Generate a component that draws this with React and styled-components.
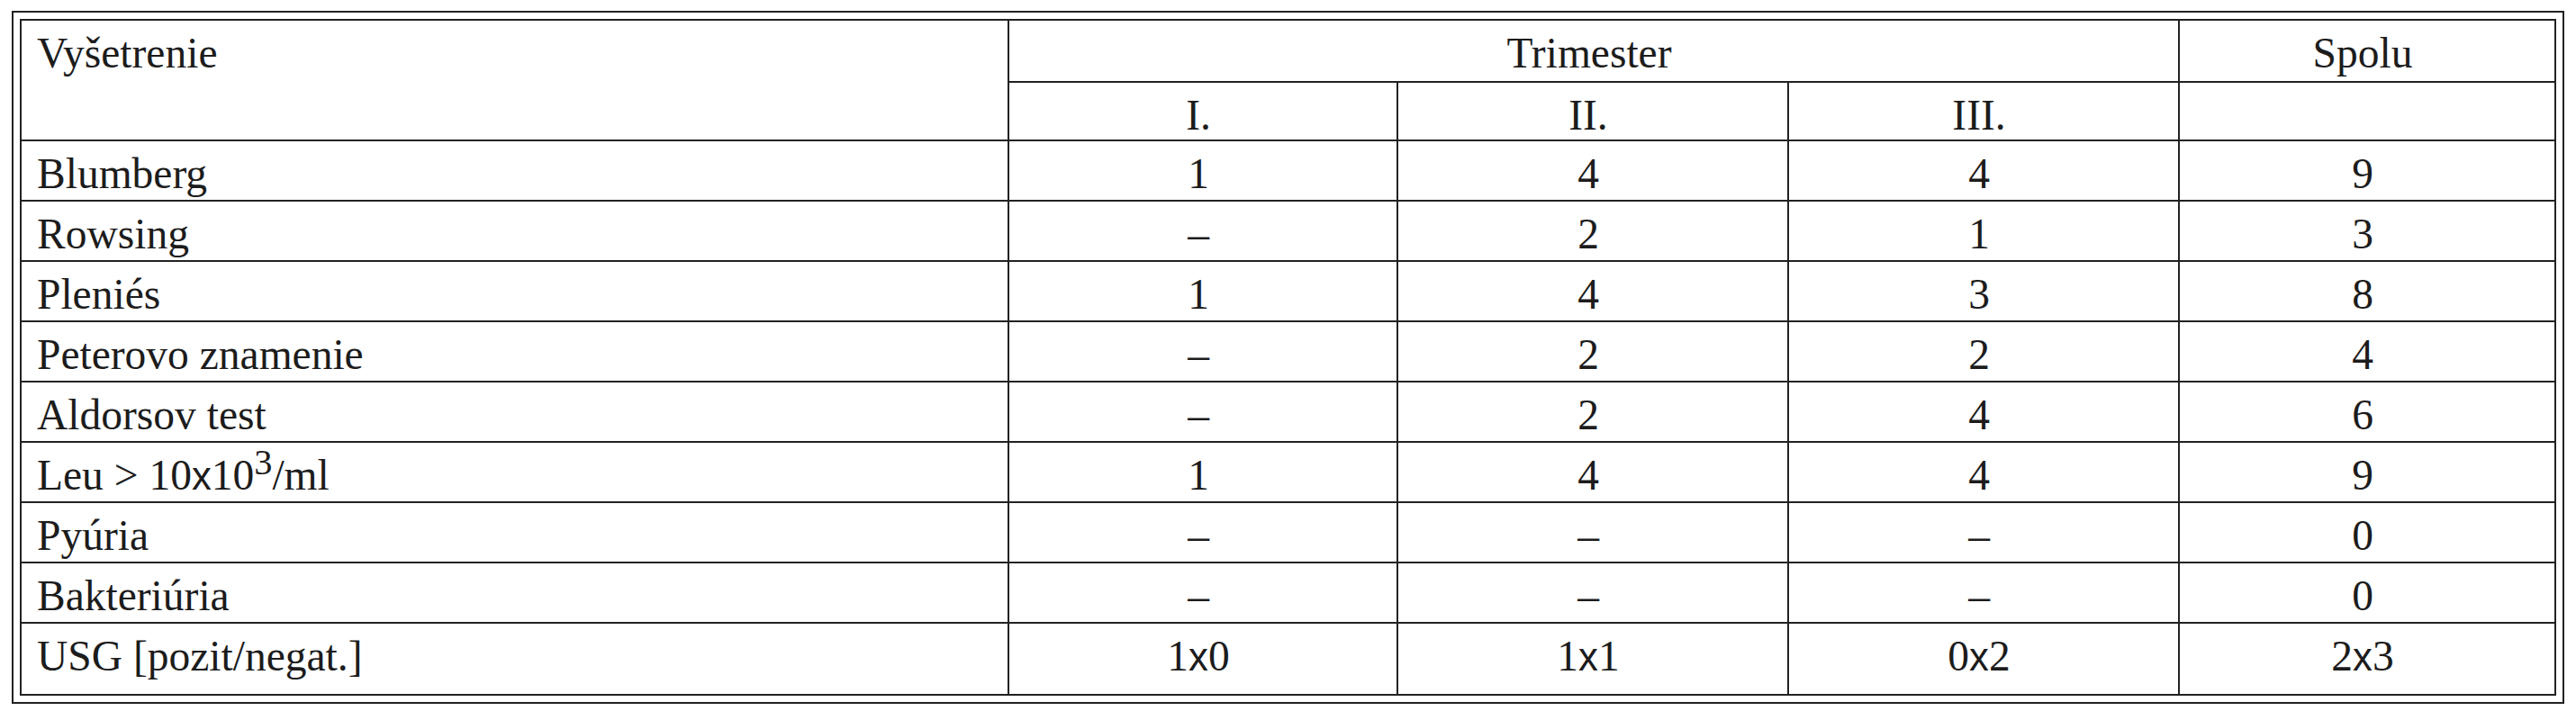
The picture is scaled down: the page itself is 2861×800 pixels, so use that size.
import React from "react";
import styled, { createGlobalStyle } from "styled-components";

const GlobalStyle = createGlobalStyle`
  html, body {
    margin: 0;
    padding: 0;
    background: #fff;
  }
`;

const Page = styled.div`
  padding: 12px 13px;
`;

const Frame = styled.div`
  border: 2px solid #222;
  padding: 7px;
`;

const Table = styled.table`
  width: 100%;
  border-collapse: collapse;
  border: 2px solid #222;
  table-layout: fixed;
  font-family: "Liberation Serif", "Times New Roman", serif;
  font-size: 47.5px;
  line-height: 54px;
  color: #1c1c1c;
`;

const Row = styled.tr`
  height: ${(p) => p.$h}px;
`;

const Cell = styled.td`
  border: 2px solid #222;
  padding: 9px ${(p) => (p.$left ? 17 : 20)}px 0 ${(p) => (p.$left ? 17 : 10)}px;
  vertical-align: top;
  text-align: ${(p) => (p.$left ? "left" : "center")};
  font-weight: normal;
  white-space: nowrap;
`;

const Sup = styled.sup`
  font-size: 0.85em;
  line-height: 0;
  vertical-align: 0.42em;
`;

const Times = styled.span`
  font-family: "Liberation Sans", Arial, sans-serif;
  font-size: 0.92em;
`;

const cross = (a, b) => (
  <>
    {a}
    <Times>x</Times>
    {b}
  </>
);

const rows = [
  ["Blumberg", "1", "4", "4", "9"],
  ["Rowsing", "–", "2", "1", "3"],
  ["Pleniés", "1", "4", "3", "8"],
  ["Peterovo znamenie", "–", "2", "2", "4"],
  ["Aldorsov test", "–", "2", "4", "6"],
  [
    <>
      Leu &gt; 10<Times>x</Times>10<Sup>3</Sup>/ml
    </>,
    "1",
    "4",
    "4",
    "9",
  ],
  ["Pyúria", "–", "–", "–", "0"],
  ["Bakteriúria", "–", "–", "–", "0"],
  ["USG [pozit/negat.]", cross(1, 0), cross(1, 1), cross(0, 2), cross(2, 3)],
];

export default function App() {
  return (
    <>
      <GlobalStyle />
      <Page>
        <Frame>
          <Table>
            <colgroup>
              <col style={{ width: 1097 }} />
              <col style={{ width: 432 }} />
              <col style={{ width: 434 }} />
              <col style={{ width: 434 }} />
              <col />
            </colgroup>
            <thead>
              <Row $h={69}>
                <Cell as="th" rowSpan={2} $left>
                  Vyšetrenie
                </Cell>
                <Cell as="th" colSpan={3}>
                  Trimester
                </Cell>
                <Cell as="th">Spolu</Cell>
              </Row>
              <Row $h={65}>
                <Cell as="th">I.</Cell>
                <Cell as="th">II.</Cell>
                <Cell as="th">III.</Cell>
                <Cell as="th" />
              </Row>
            </thead>
            <tbody>
              {rows.map((r, i) => (
                <Row key={i} $h={i === rows.length - 1 ? 80 : 67}>
                  {r.map((v, j) => (
                    <Cell key={j} $left={j === 0}>
                      {v}
                    </Cell>
                  ))}
                </Row>
              ))}
            </tbody>
          </Table>
        </Frame>
      </Page>
    </>
  );
}
